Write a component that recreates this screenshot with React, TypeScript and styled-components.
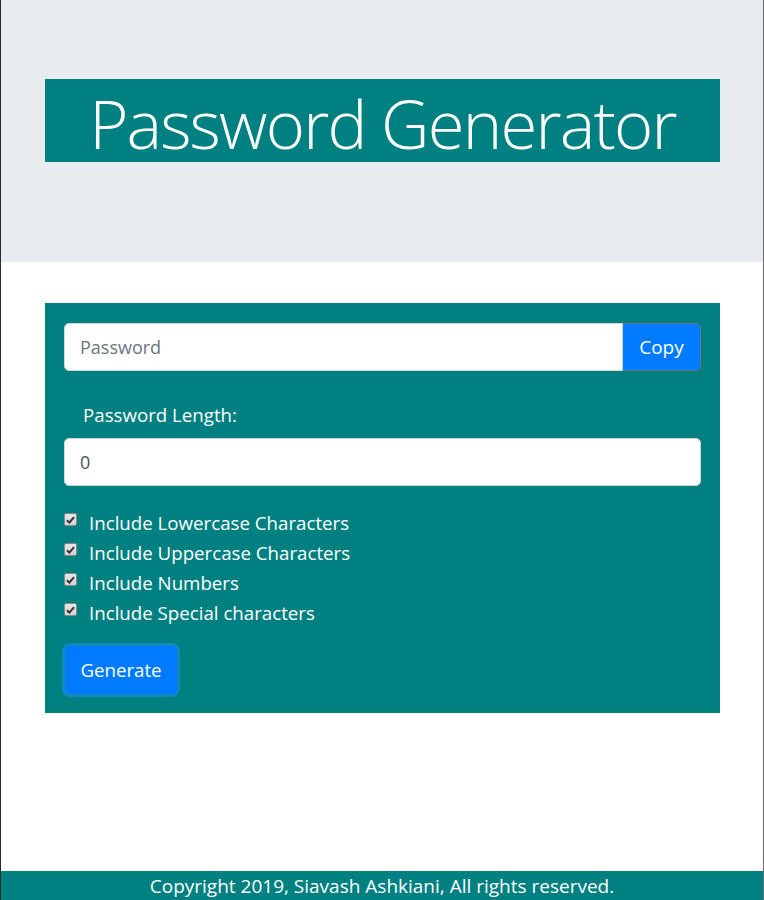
import React from "react";
import styled, { createGlobalStyle } from "styled-components";

const Global = createGlobalStyle`
  html, body { margin: 0; padding: 0; }
  body {
    font-family: "Open Sans", "Noto Sans", sans-serif;
    background: #fff;
    color: #212529;
  }
  * { box-sizing: border-box; }
`;

const Page = styled.div`
  min-height: 900px;
  display: flex;
  flex-direction: column;
  border-left: 1px solid #2a2a2a;
  border-right: 1px solid #6a6a6a;
`;

const Jumbotron = styled.header`
  background: #e9ecef;
  height: 262px;
  padding: 79px 43px 0 44px;
`;

const TitleBox = styled.h1`
  margin: 0;
  background: #008080;
  color: #fff;
  height: 83px;
  padding-top: 5px;
  font-family: "Open Sans", sans-serif;
  font-weight: 300;
  font-size: 67px;
  line-height: 78px;
  text-align: center;
  letter-spacing: -1.8px;
`;

const Main = styled.main`
  flex: 1;
  padding: 41px 43px 0 44px;
`;

const Panel = styled.section`
  background: #008080;
  padding: 20px 19px 16px 19px;
  height: 410px;
`;

const InputGroup = styled.div`
  display: flex;
  height: 48px;
`;

const TextInput = styled.input<{ $joined?: boolean }>`
  flex: 1;
  min-width: 0;
  height: 48px;
  border: 1px solid #ced4da;
  border-radius: ${(p) => (p.$joined ? "5px 0 0 5px" : "5px")};
  background: #fff;
  padding: 0 15px;
  font-family: "Open Sans", sans-serif;
  font-size: 18px;
  color: #495057;
  outline: none;
  &::placeholder { color: #6c757d; }
`;

const CopyButton = styled.button`
  width: 78px;
  height: 48px;
  border: 1px solid #6c757d;
  border-left: none;
  border-radius: 0 5px 5px 0;
  background: #007bff;
  color: #fff;
  font-family: "Open Sans", sans-serif;
  font-size: 19px;
  padding: 0 0 0;
`;

const Label = styled.label`
  display: block;
  color: #fff;
  font-size: 18.7px;
  padding: 31px 0 0 19px;
  height: 67px;
  line-height: 26px;
`;

const Checks = styled.div`
  display: flex;
  flex-direction: column;
  padding-top: 21px;
`;

const CheckRow = styled.label`
  display: flex;
  align-items: center;
  height: 30px;
  color: #fff;
  font-size: 18.7px;
`;

const Box = styled.span`
  width: 13px;
  height: 13px;
  margin: -5px 12px 0 0;
  border: 1px solid #8a8a8a;
  border-radius: 2px;
  background: linear-gradient(#e6e6e6, #d4d4d4);
  display: flex;
  align-items: center;
  justify-content: center;
`;

const GenerateButton = styled.button`
  margin-top: 19px;
  width: 112px;
  height: 48px;
  margin-left: 1px;
  border: 1px solid #007bff;
  border-radius: 5px;
  background: #007bff;
  color: #fff;
  font-family: "Open Sans", sans-serif;
  font-size: 18.7px;
  box-shadow: 0 0 0 3px rgba(38, 143, 255, 0.5);
  padding: 0 0 2px;
`;

const Footer = styled.footer`
  background: #008080;
  color: #fff;
  height: 29px;
  text-align: center;
  font-size: 19px;
  line-height: 31px;
  white-space: nowrap;
`;

const Tick = () => (
  <svg width="9" height="8" viewBox="0 0 9 8">
    <path d="M1 4.2 L3.4 6.6 L8 1.2" stroke="#333" strokeWidth="2" fill="none" />
  </svg>
);

const options = [
  "Include Lowercase Characters",
  "Include Uppercase Characters",
  "Include Numbers",
  "Include Special characters",
];

export default function App() {
  return (
    <>
      <Global />
      <Page>
        <Jumbotron>
          <TitleBox>Password Generator</TitleBox>
        </Jumbotron>
        <Main>
          <Panel>
            <InputGroup>
              <TextInput $joined placeholder="Password" readOnly />
              <CopyButton>Copy</CopyButton>
            </InputGroup>
            <Label>Password Length:</Label>
            <TextInput defaultValue="0" style={{ width: "100%" }} />
            <Checks>
              {options.map((o) => (
                <CheckRow key={o}>
                  <Box>
                    <Tick />
                  </Box>
                  {o}
                </CheckRow>
              ))}
            </Checks>
            <GenerateButton>Generate</GenerateButton>
          </Panel>
        </Main>
        <Footer>Copyright 2019, Siavash Ashkiani, All rights reserved.</Footer>
      </Page>
    </>
  );
}
